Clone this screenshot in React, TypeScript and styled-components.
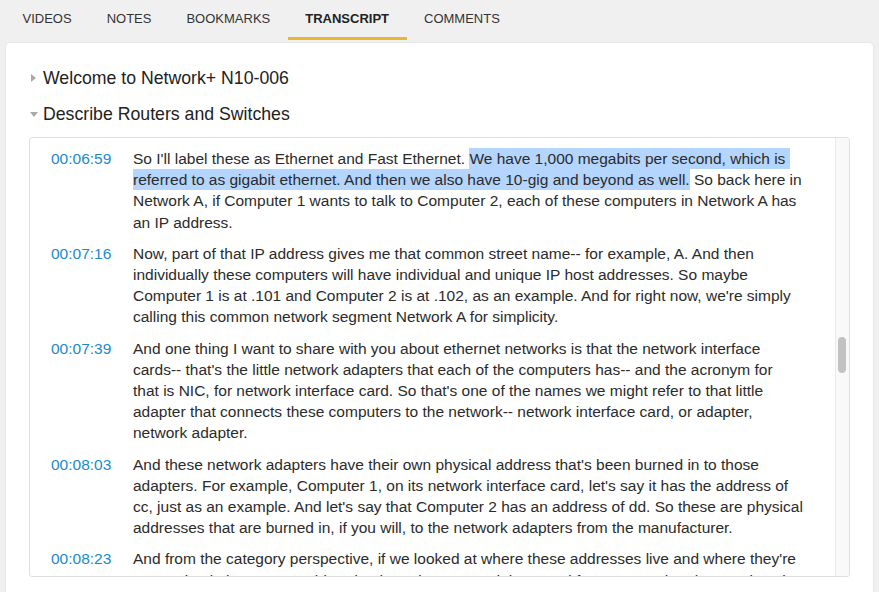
import styled, { createGlobalStyle } from "styled-components";

const GlobalStyle = createGlobalStyle`
  html, body {
    margin: 0;
    padding: 0;
    background: #f0f0f0;
    font-family: "Liberation Sans", Arial, sans-serif;
    color: #333;
  }
`;

const Page = styled.div`
  width: 879px;
  height: 592px;
  overflow: hidden;
  background: #f0f0f0;
`;

const Tabs = styled.nav`
  display: flex;
  height: 40px;
  padding-left: 5px;
`;

const Tab = styled.div<{ $active?: boolean }>`
  display: flex;
  align-items: center;
  padding: 0 17.5px 1px;
  font-size: 13px;
  color: ${(p) => (p.$active ? "#222" : "#333")};
  font-weight: ${(p) => (p.$active ? "bold" : "normal")};
  border-bottom: 3px solid ${(p) => (p.$active ? "#ebb633" : "transparent")};
  box-sizing: border-box;
  height: 40px;
  cursor: pointer;
`;

const Card = styled.section`
  margin: 3px 6px 0;
  padding: 23px 23px 30px;
  background: #fff;
  border-radius: 4px;
  box-shadow: 0 0 2px rgba(0, 0, 0, 0.12);
`;

const Heading = styled.div`
  display: flex;
  align-items: center;
  height: 24px;
  margin-bottom: 12px;
  padding-left: 2px;
  font-size: 17.7px;
  color: #222;
`;

const Caret = styled.span<{ $open?: boolean }>`
  display: inline-block;
  width: 0;
  height: 0;
  margin-right: ${(p) => (p.$open ? "5px" : "7px")};
  margin-left: ${(p) => (p.$open ? "-1px" : "0")};
  border-style: solid;
  border-color: transparent;
  ${(p) =>
    p.$open
      ? `border-width: 5px 4.5px 0 4.5px; border-top-color: #aaa;`
      : `border-width: 4.5px 0 4.5px 5px; border-left-color: #aaa;`}
`;

const TranscriptBox = styled.div`
  display: flex;
  height: 440px;
  margin-top: -1px;
  border: 1px solid #dfdfdf;
  border-radius: 3px;
  box-sizing: border-box;
  overflow: hidden;
`;

const Lines = styled.div`
  flex: 1;
  overflow: hidden;
  padding: 10px 20px 0 21px;
`;

const Row = styled.div`
  display: grid;
  grid-template-columns: 82px 1fr;
  margin-bottom: 10px;
  font-size: 15.5px;
  line-height: 21.2px;
`;

const Time = styled.a`
  color: #1a8bcb;
  text-decoration: none;
  cursor: pointer;
`;

const Text = styled.p`
  margin: 0;
  color: #2b2b2b;
  white-space: pre-line;
`;

const Mark = styled.span`
  background: #b4d5fe;
  padding: 2px 0;
`;

const Track = styled.div`
  width: 14px;
  flex: none;
  background: #f9f9f9;
  border-left: 1px solid #ebebeb;
  box-sizing: border-box;
`;

const Thumb = styled.div`
  width: 8px;
  height: 36px;
  margin: 199px 0 0 2px;
  border-radius: 4px;
  background: #c2c2c2;
`;

type Entry = { time: string; before: string; marked?: string; after?: string };

const rows: Entry[] = [
  {
    time: "00:06:59",
    before: "So I'll label these as Ethernet and Fast Ethernet. ",
    marked:
      "We have 1,000 megabits per second, which is\u00a0\nreferred to as gigabit ethernet. And then we also have 10-gig and beyond as well.",
    after:
      " So back here in\nNetwork A, if Computer 1 wants to talk to Computer 2, each of these computers in Network A has\nan IP address.",
  },
  {
    time: "00:07:16",
    before:
      "Now, part of that IP address gives me that common street name-- for example, A. And then\nindividually these computers will have individual and unique IP host addresses. So maybe\nComputer 1 is at .101 and Computer 2 is at .102, as an example. And for right now, we're simply\ncalling this common network segment Network A for simplicity.",
  },
  {
    time: "00:07:39",
    before:
      "And one thing I want to share with you about ethernet networks is that the network interface\ncards-- that's the little network adapters that each of the computers has-- and the acronym for\nthat is NIC, for network interface card. So that's one of the names we might refer to that little\nadapter that connects these computers to the network-- network interface card, or adapter,\nnetwork adapter.",
  },
  {
    time: "00:08:03",
    before:
      "And these network adapters have their own physical address that's been burned in to those\nadapters. For example, Computer 1, on its network interface card, let's say it has the address of\ncc, just as an example. And let's say that Computer 2 has an address of dd. So these are physical\naddresses that are burned in, if you will, to the network adapters from the manufacturer.",
  },
  {
    time: "00:08:23",
    before:
      "And from the category perspective, if we looked at where these addresses live and where they're\ncategorized, they are considered to be at layer 2. And the actual fancy name that they're given is a\nMAC address, or a media access control address.",
  },
];

const tabs = ["VIDEOS", "NOTES", "BOOKMARKS", "TRANSCRIPT", "COMMENTS"];

export default function App() {
  return (
    <Page>
      <GlobalStyle />
      <Tabs>
        {tabs.map((t) => (
          <Tab key={t} $active={t === "TRANSCRIPT"}>
            {t}
          </Tab>
        ))}
      </Tabs>
      <Card>
        <Heading>
          <Caret />
          Welcome to Network+ N10-006
        </Heading>
        <Heading>
          <Caret $open />
          Describe Routers and Switches
        </Heading>
        <TranscriptBox>
          <Lines>
            {rows.map((r) => (
              <Row key={r.time}>
                <Time>{r.time}</Time>
                <Text>
                  {r.before}
                  {r.marked && <Mark>{r.marked}</Mark>}
                  {r.after}
                </Text>
              </Row>
            ))}
          </Lines>
          <Track>
            <Thumb />
          </Track>
        </TranscriptBox>
      </Card>
    </Page>
  );
}
